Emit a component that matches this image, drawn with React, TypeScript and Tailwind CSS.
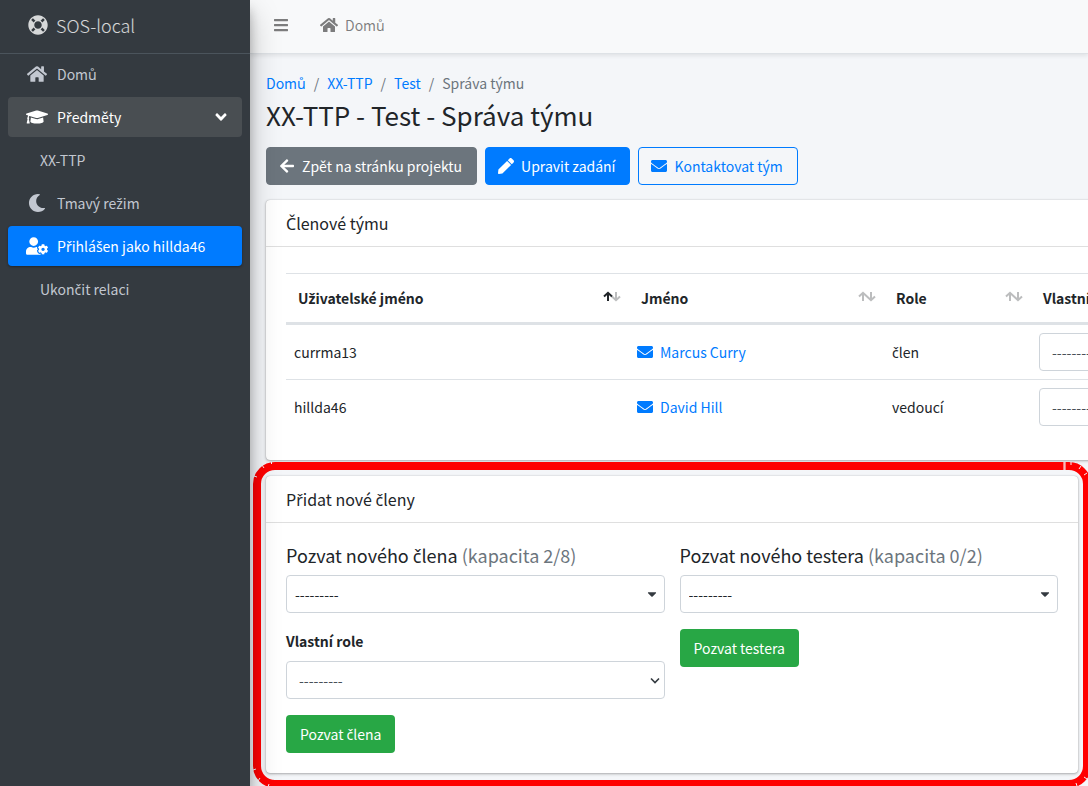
import type { ReactNode } from 'react'
import {
  FaAngleDown,
  FaArrowLeft,
  FaBars,
  FaCaretDown,
  FaEnvelope,
  FaGraduationCap,
  FaHome,
  FaLifeRing,
  FaMoon,
  FaPen,
  FaUserCog,
} from 'react-icons/fa'

const members = [
  { username: 'currma13', name: 'Marcus Curry', role: 'člen' },
  { username: 'hillda46', name: 'David Hill', role: 'vedoucí' },
]

const columns = [
  { title: 'Uživatelské jméno', width: 'w-[343px]', sorted: true },
  { title: 'Jméno', width: 'w-[255px]', sorted: false },
  { title: 'Role', width: 'w-[147px]', sorted: false },
  { title: 'Vlastní role', width: '', sorted: false },
]

const crumbs = ['Domů', 'XX-TTP', 'Test']

function Cz({ children }: { children: string }) {
  return (
    <span>
      {children.split(/([čřšžČŘŠŽ])/).map((part, i) =>
        i % 2 ? <span key={i} className="font-['Noto_Sans',sans-serif] leading-none">{part}</span> : part
      )}
    </span>
  )
}

function NavItem({ icon, label, className = 'text-[#c2c7d0]', open }: { icon?: ReactNode; label: string; className?: string; open?: boolean }) {
  return (
    <li>
      <a href="#" className={`flex h-10 items-center rounded px-4 ${className}`}>
        {icon && <span className="mr-[7px] flex w-[26px] justify-center">{icon}</span>}
        <span className={icon ? 'flex-1' : 'flex-1 pl-4'}><Cz>{label}</Cz></span>
        {open && <FaAngleDown size={18} className="-mr-1" />}
      </a>
    </li>
  )
}

function SortIcon({ sorted }: { sorted: boolean }) {
  return (
    <svg width="18" height="14" viewBox="0 0 18 14" fill="none" strokeWidth="2" stroke="#212529">
      <path d="M5 10V2M1 5.5L5 1.8L9 5.5" opacity={sorted ? 1 : 0.3} />
      <path d="M13 1v8M9 5.5L13 9.2L17 5.5" opacity="0.3" />
    </svg>
  )
}

function Card({ title, className = '', children }: { title: string; className?: string; children: ReactNode }) {
  return (
    <section className={`rounded bg-white shadow-[0_0_1px_rgba(0,0,0,0.3),0_1px_3px_rgba(0,0,0,0.3)] ${className}`}>
      <h2 className="border-b border-black/[.125] px-5 py-[11px] text-[16px] leading-6"><Cz>{title}</Cz></h2>
      {children}
    </section>
  )
}

function Picker({ id, caret = false }: { id: string; caret?: boolean }) {
  return (
    <div className="relative">
      <select
        id={id}
        className={`h-[38px] w-full appearance-none rounded border border-[#ced4da] bg-white ${caret ? 'pl-2 text-[#212529]' : 'pl-3 text-[#495057]'}`}
      >
        <option>---------</option>
      </select>
      {caret ? (
        <FaCaretDown size={14} className="pointer-events-none absolute right-[6px] top-3 text-[#343a40]" />
      ) : (
        <svg className="pointer-events-none absolute right-[5px] top-4" width="10" height="8" viewBox="0 0 10 8" fill="none" stroke="#343a40" strokeWidth="1.6">
          <path d="M1 1.5L5 5.5L9 1.5" />
        </svg>
      )}
    </div>
  )
}

// Small breaks in the red line where it bends
function CornerBreaks({ d, className }: { d: string; className: string }) {
  return (
    <svg className={`absolute ${className}`} width="28" height="28" viewBox="0 0 28 28" fill="none" stroke="#f4f6f9" strokeWidth="1">
      <path d={d} />
    </svg>
  )
}

export default function App() {
  return (
    <div className="flex min-h-screen overflow-hidden bg-[#f4f6f9] font-['Noto_Sans_CJK_SC','Noto_Sans',sans-serif] text-[14px] leading-6 text-[#212529]">
      {/* Sidebar */}
      <aside className="relative z-20 w-[250px] shrink-0 bg-[#343a40] shadow-[0_14px_28px_rgba(0,0,0,0.25),0_10px_10px_rgba(0,0,0,0.22)]">
        <a href="#" className="flex h-[54px] items-center gap-2 border-b border-[#4b545c] pb-1 pl-7 text-[18px] font-light leading-[26px] text-white/80">
          <FaLifeRing size={20} />
          SOS-local
        </a>
        <nav className="px-2">
          <ul className="flex flex-col gap-[3px]">
            <NavItem icon={<FaHome size={20} />} label="Domů" />
            <NavItem icon={<FaGraduationCap size={22} />} label="Předměty" className="bg-[#494e52] text-white" open />
            <NavItem label="XX-TTP" />
            <NavItem icon={<FaMoon size={18} />} label="Tmavý režim" />
            <NavItem
              icon={<FaUserCog size={22} />}
              label="Přihlášen jako hillda46"
              className="bg-[#007bff] text-white shadow-[0_1px_3px_rgba(0,0,0,0.12),0_1px_2px_rgba(0,0,0,0.24)]"
            />
            <NavItem label="Ukončit relaci" />
          </ul>
        </nav>
      </aside>

      <div className="min-w-0 flex-1">
        {/* Top bar */}
        <header className="flex h-[54px] items-center border-b border-[#dee2e6] bg-[#f8f9fa] pb-1 pl-[23px] text-black/50 shadow-[0_2px_4px_rgba(0,0,0,0.08)]">
          <button type="button" aria-label="Menu">
            <FaBars size={16} />
          </button>
          <a href="#" className="ml-[31px] flex items-center gap-[7px]">
            <FaHome size={18} />
            Domů
          </a>
        </header>

        <main className="pl-4 pt-[17px]">
          <ol className="flex text-[#6c757d]">
            {crumbs.map((crumb) => (
              <li key={crumb}>
                <a href="#" className="text-[#007bff]">{crumb}</a>
                <span className="px-2">/</span>
              </li>
            ))}
            <li>Správa týmu</li>
          </ol>
          <h1 className="mt-[2px] text-[26px] leading-9">XX-TTP - Test - Správa týmu</h1>

          <div className="mt-[14px] flex gap-2">
            <a href="#" className="flex h-[38px] items-center gap-[7px] rounded border border-[#6c757d] bg-[#6c757d] pl-3 pr-[14px] text-white">
              <FaArrowLeft size={16} />
              Zpět na stránku projektu
            </a>
            <a href="#" className="flex h-[38px] items-center gap-[7px] rounded border border-[#007bff] bg-[#007bff] pl-3 pr-[14px] text-white">
              <FaPen size={16} />
              Upravit zadání
            </a>
            <a href="#" className="flex h-[38px] items-center gap-[7px] rounded border border-[#007bff] pl-3 pr-[14px] text-[#007bff]">
              <FaEnvelope size={16} />
              Kontaktovat tým
            </a>
          </div>

          {/* Members table runs past the right edge of the page */}
          <Card title="Členové týmu" className="mt-[15px] w-[calc(100%+120px)] pb-[26px]">
            <div className="px-5 pt-[26px]">
              <table className="w-full table-fixed border-collapse">
                <thead>
                  <tr className="border-b-[3px] border-t border-b-[#dee2e6] border-t-[#dee2e6]">
                    {columns.map((col) => (
                      <th key={col.title} className={`py-3 pl-3 pr-2 text-left font-bold ${col.width}`}>
                        <div className="flex items-center justify-between whitespace-nowrap">
                          <Cz>{col.title}</Cz>
                          <SortIcon sorted={col.sorted} />
                        </div>
                      </th>
                    ))}
                  </tr>
                </thead>
                <tbody>
                  {members.map((m) => (
                    <tr key={m.username} className="border-b border-[#dee2e6] last:border-b-0">
                      <td className="p-2">{m.username}</td>
                      <td className="p-2">
                        <a href="#" className="flex items-center gap-[7px] text-[#007bff]">
                          <FaEnvelope size={16} />
                          {m.name}
                        </a>
                      </td>
                      <td className="p-2"><Cz>{m.role}</Cz></td>
                      <td className="p-2">
                        <label htmlFor={`role-${m.username}`} className="sr-only">Vlastní role</label>
                        <Picker id={`role-${m.username}`} />
                      </td>
                    </tr>
                  ))}
                </tbody>
              </table>
            </div>
          </Card>

          <div className="relative mb-4 mr-[10px] mt-4">
            <Card title="Přidat nové členy">
              <div className="grid grid-cols-2 items-start gap-[15px] p-5">
                <form>
                  <label htmlFor="member" className="mb-2 block text-[18px]">
                    <Cz>Pozvat nového člena</Cz> <span className="text-[#6c757d]">(kapacita 2/8)</span>
                  </label>
                  <Picker id="member" caret />
                  <label htmlFor="custom-role" className="mb-2 mt-4 block font-bold">Vlastní role</label>
                  <Picker id="custom-role" />
                  <button type="button" className="mt-4 h-[38px] rounded bg-[#28a745] px-[14px] text-white"><Cz>Pozvat člena</Cz></button>
                </form>
                <form>
                  <label htmlFor="tester" className="mb-2 block text-[18px]">
                    Pozvat nového testera <span className="text-[#6c757d]">(kapacita 0/2)</span>
                  </label>
                  <Picker id="tester" caret />
                  <button type="button" className="mt-4 h-[38px] rounded bg-[#28a745] px-[14px] text-white">Pozvat testera</button>
                </form>
              </div>
            </Card>
            {/* Red highlight around the card */}
            <div className="pointer-events-none absolute -bottom-[15px] -left-[13px] -right-[13px] -top-[14px] rounded-[22px] border-8 border-[#f00]">
              <CornerBreaks className="-left-2 -top-2" d="M18.5 0v2M9 3l2 3M1 14l3 1" />
              <CornerBreaks className="-right-2 -top-2" d="M1 0v8M2 0v8M8 0v3M18 4l-2 3M24 11l-3 2" />
              <CornerBreaks className="-bottom-2 -left-2" d="M0 10l3 -1M5 21l2 -3M15 27l1 -3" />
              <CornerBreaks className="-bottom-2 -right-2" d="M24 19l-3 -2M14 26l-1 -3" />
            </div>
          </div>
        </main>
      </div>
    </div>
  )
}
